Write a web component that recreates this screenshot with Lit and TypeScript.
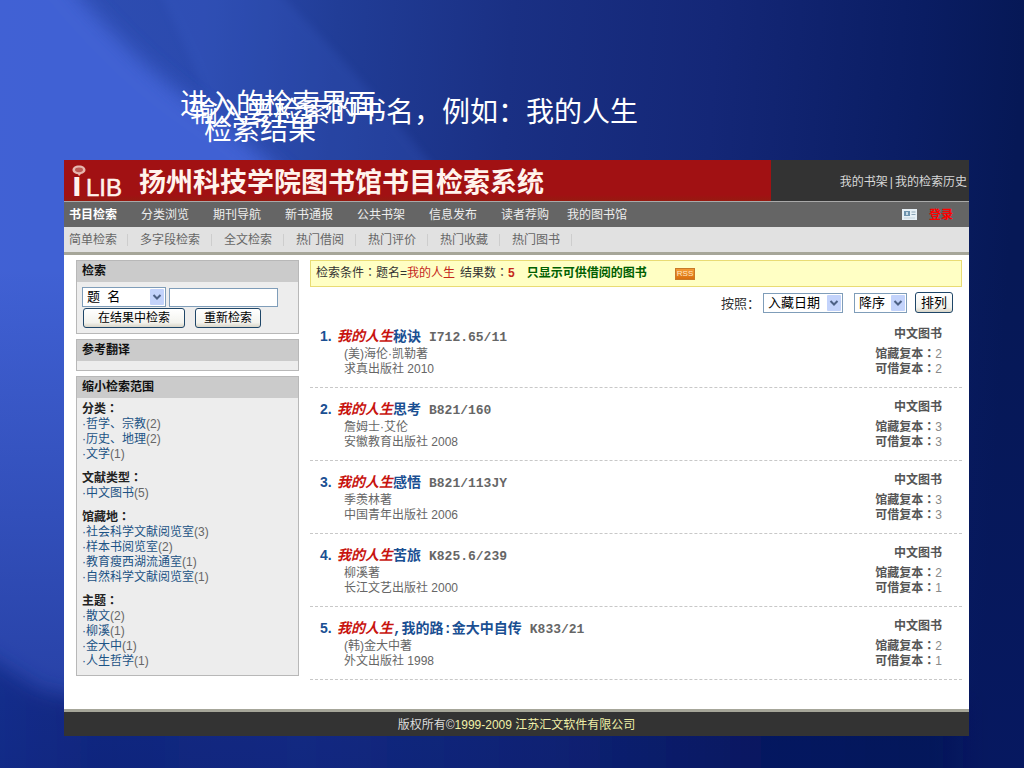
import { LitElement, html, css } from "lit";
import { customElement, property } from "lit/decorators.js";

interface Book {
  rest: string;
  call: string;
  author: string;
  publisher: string;
  total: number;
  free: number;
}

interface Facet {
  label: string;
  items: [string, number][];
}

const KEYWORD = "我的人生";

const BOOKS: Book[] = [
  { rest: "秘诀", call: "I712.65/11", author: "(美)海伦·凯勒著", publisher: "求真出版社 2010", total: 2, free: 2 },
  { rest: "思考", call: "B821/160", author: "詹姆士·艾伦", publisher: "安徽教育出版社 2008", total: 3, free: 3 },
  { rest: "感悟", call: "B821/113JY", author: "季羡林著", publisher: "中国青年出版社 2006", total: 3, free: 3 },
  { rest: "苦旅", call: "K825.6/239", author: "柳溪著", publisher: "长江文艺出版社 2000", total: 2, free: 1 },
  { rest: ",我的路:金大中自传", call: "K833/21", author: "(韩)金大中著", publisher: "外文出版社 1998", total: 2, free: 1 },
];

const FACETS: Facet[] = [
  { label: "分类", items: [["哲学、宗教", 2], ["历史、地理", 2], ["文学", 1]] },
  { label: "文献类型", items: [["中文图书", 5]] },
  { label: "馆藏地", items: [["社会科学文献阅览室", 3], ["样本书阅览室", 2], ["教育瘦西湖流通室", 1], ["自然科学文献阅览室", 1]] },
  { label: "主题", items: [["散文", 2], ["柳溪", 1], ["金大中", 1], ["人生哲学", 1]] },
];

const NAV = ["书目检索", "分类浏览", "期刊导航", "新书通报", "公共书架", "信息发布", "读者荐购", "我的图书馆"];
const SUBNAV = ["简单检索", "多字段检索", "全文检索", "热门借阅", "热门评价", "热门收藏", "热门图书"];

const colon = html`<span class="colon">：</span>`;

const shared = css`
  :host {
    display: block;
    font-family: "Liberation Sans", "Noto Sans CJK SC", sans-serif;
    font-size: 12px;
    line-height: 15px;
  }
  * { box-sizing: border-box; }
  a { color: inherit; text-decoration: none; }
  ul, ol { list-style: none; margin: 0; padding: 0; }
  h1, h2, h3, p { margin: 0; font-size: inherit; }
  .colon { font-family: "Noto Sans CJK TC", sans-serif; line-height: 0; }
  button {
    height: 20px;
    padding: 0 8px;
    border: 1px solid #1f4668;
    border-radius: 3px;
    background: linear-gradient(#ffffff, #f3f3ee 75%, #d9d5c8);
    color: #000;
    font: 12px/14px "Liberation Sans", "Noto Sans CJK SC", sans-serif;
  }
`;

@customElement("pick-list")
class PickList extends LitElement {
  static styles = [shared, css`
    :host { position: relative; }
    select {
      display: block;
      width: 100%;
      height: 20px;
      padding: 0 20px 0 4px;
      border: 1px solid #7f9db9;
      border-radius: 0;
      background: #fff;
      color: #000;
      appearance: none;
      white-space: pre;
      font: 13px/18px "Liberation Sans", "Noto Sans CJK SC", sans-serif;
    }
    svg {
      position: absolute;
      top: 2px;
      right: 2px;
      pointer-events: none;
    }
  `];
  @property() name = "";
  @property({ type: Array }) options: string[] = [];

  render() {
    return html`
      <select aria-label=${this.name}>${this.options.map((o) => html`<option>${o}</option>`)}</select>
      <svg width="14" height="16" viewBox="0 0 14 16" aria-hidden="true">
        <rect width="14" height="16" rx="1" fill="#c3d3fb" />
        <path d="M3.5 6 L7 9.5 L10.5 6" fill="none" stroke="#4d6185" stroke-width="2" />
      </svg>`;
  }
}

@customElement("side-panels")
class SidePanels extends LitElement {
  static styles = [shared, css`
    :host { display: flex; flex-direction: column; gap: 5px; }
    section { border: 1px solid #b8b8b8; background: #ededed; color: #222; }
    h2 {
      padding: 2px 5px;
      background: #cbcbcb;
      line-height: 17px;
      color: #111;
    }
    .search { padding: 5px; }
    .row { display: flex; gap: 3px; align-items: center; }
    .buttons { gap: 10px; padding: 1px 0 0 1px; }
    pick-list { width: 84px; }
    input {
      width: 109px;
      height: 19px;
      border: 1px solid #7f9db9;
      background: #fff;
      font-size: 12px;
    }
    .wide { padding: 0 14px; }
    .empty { height: 9px; }
    .facets { display: flex; flex-direction: column; gap: 9px; padding: 4px 5px 6px; }
    .facets a { color: #1c5385; }
    .count { color: #666; }
  `];

  render() {
    return html`
      <section>
        <h2>检索</h2>
        <form class="search" @submit=${(e: Event) => e.preventDefault()}>
          <div class="row">
            <pick-list name="检索字段" .options=${["题\u00a0 名"]}></pick-list>
            <input type="text" aria-label="检索词" />
          </div>
          <div class="row buttons">
            <button class="wide">在结果中检索</button>
            <button>重新检索</button>
          </div>
        </form>
      </section>
      <section>
        <h2>参考翻译</h2>
        <div class="empty"></div>
      </section>
      <section>
        <h2>缩小检索范围</h2>
        <div class="facets">
          ${FACETS.map((f) => html`
            <div>
              <h3>${f.label}${colon}</h3>
              <ul>
                ${f.items.map(([name, n]) => html`<li><a href="#">·${name}</a><span class="count">(${n})</span></li>`)}
              </ul>
            </div>`)}
        </div>
      </section>`;
  }
}

@customElement("result-list")
class ResultList extends LitElement {
  static styles = [shared, css`
    .summary {
      display: flex;
      align-items: center;
      height: 27px;
      padding: 0 5px;
      border: 1px solid #e9dc74;
      background: #ffffc4;
      color: #333;
    }
    .red { color: #c5281c; }
    .summary .hits { margin-left: 5px; }
    .summary .only { margin-left: 12px; color: #006000; font-weight: bold; }
    .rss {
      margin-left: 28px;
      padding: 0 1px;
      border: 1px solid #c87a28;
      background: linear-gradient(#f39a35, #d9700f);
      color: #ffe9c8;
      font-size: 8px;
      line-height: 10px;
    }
    .sort {
      display: flex;
      justify-content: flex-end;
      align-items: center;
      padding: 5px 9px 2px 0;
      font-size: 13px;
      line-height: 21px;
      color: #333;
    }
    .sort span { padding: 2px 3px 0 0; line-height: 19px; }
    .sort pick-list { width: 80px; margin-right: 11px; }
    .sort pick-list.order { width: 53px; margin-right: 8px; }
    .sort button { height: 21px; padding: 0 5px; font-size: 13px; }
    li {
      display: flex;
      justify-content: space-between;
      padding: 12px 20px 10px 10px;
      border-bottom: 1px dashed #c8c8c8;
      color: #666;
    }
    h3 {
      display: flex;
      align-items: baseline;
      height: 18px;
      margin-bottom: 2px;
      font: bold 14px/18px "Liberation Mono", "Noto Sans CJK SC", monospace;
      color: #1a4f92;
    }
    .no { width: 17px; font-family: "Liberation Sans", sans-serif; }
    em { color: #c8140f; }
    .call { margin-left: 8px; font-size: 13px; color: #666; }
    .detail { padding-left: 24px; }
    .stock { text-align: right; color: #555; }
    .kind { margin-bottom: 5px; font-weight: bold; }
    .num { color: #888; }
  `];

  render() {
    return html`
      <div class="summary">
        <span>检索条件${colon}题名=</span><span class="red">${KEYWORD}</span>
        <span class="hits">结果数${colon}</span><b class="red">${BOOKS.length}</b>
        <a class="only" href="#">只显示可供借阅的图书</a>
        <a class="rss" href="#">RSS</a>
      </div>
      <div class="sort">
        <span>按照：</span>
        <pick-list name="排序字段" .options=${["入藏日期"]}></pick-list>
        <pick-list class="order" name="排序方向" .options=${["降序"]}></pick-list>
        <button>排列</button>
      </div>
      <ol>
        ${BOOKS.map((b, i) => html`
          <li>
            <div>
              <h3><span class="no">${i + 1}.</span><a href="#"><em>${KEYWORD}</em>${b.rest}</a><span class="call">${b.call}</span></h3>
              <div class="detail">
                <p>${b.author}</p>
                <p>${b.publisher}</p>
              </div>
            </div>
            <div class="stock">
              <p class="kind">中文图书</p>
              <p><b>馆藏复本${colon}</b><span class="num">${b.total}</span></p>
              <p><b>可借复本${colon}</b><span class="num">${b.free}</span></p>
            </div>
          </li>`)}
      </ol>`;
  }
}

@customElement("app-root")
class AppRoot extends LitElement {
  static styles = [shared, css`
    :host {
      display: flex;
      flex-direction: column;
      box-sizing: border-box;
      min-height: 100vh;
      position: relative;
      overflow: hidden;
      background: #0a1a5c;
    }
    .backdrop { position: absolute; inset: 0; width: 100%; height: 100%; }
    .captions {
      position: relative;
      height: 160px;
      color: #fff;
      font-size: 28px;
      line-height: 36px;
    }
    .captions p { position: absolute; white-space: nowrap; }
    .enter { left: 180px; top: 87px; }
    .type { left: 190px; top: 95px; }
    .result { left: 204px; top: 113px; }
    .window {
      position: relative;
      flex: 1;
      display: flex;
      flex-direction: column;
      margin: 0 55px 32px 64px;
      background: #fff;
    }
    .banner {
      display: grid;
      grid-template-columns: 1fr 198px;
      height: 42px;
      border-bottom: 1px solid #a9a9a9;
      background: #333;
    }
    .brand {
      display: flex;
      align-items: center;
      gap: 15px;
      padding-left: 6px;
      background: linear-gradient(#a11113 85%, #961a10);
    }
    h1 { padding-top: 5px; font-size: 27px; line-height: 36px; font-weight: bold; color: #fff3ec; white-space: nowrap; }
    .logo { overflow: visible; font-family: "Liberation Sans", sans-serif; }
    .mine {
      display: flex;
      align-items: center;
      justify-content: flex-end;
      gap: 2px;
      padding: 4px 2px 0 0;
      color: #d8d8d8;
    }
    .nav {
      display: flex;
      align-items: center;
      height: 25px;
      padding: 2px 16px 0 5px;
      background: #656565;
      color: #eee;
    }
    .nav ul { display: flex; flex: 1; gap: 24px; }
    .nav li:first-child { font-weight: bold; color: #fff; }
    .nav li:last-child { margin-left: -6px; }
    .nav svg { margin-bottom: 2px; }
    .login { margin-left: 12px; font-weight: bold; color: #f00; }
    .subnav {
      display: flex;
      align-items: center;
      height: 28px;
      padding-top: 1px;
      border-bottom: 3px solid #a6a699;
      background: #e1e1e1;
      color: #666;
    }
    .subnav ul { display: flex; padding-left: 5px; }
    .subnav li { padding: 0 11px 0 12px; border-right: 1px solid #cdcdcd; line-height: 12px; }
    .subnav li:first-child { padding: 0 10px 0 0; }
    .body {
      flex: 1;
      display: grid;
      grid-template-columns: 223px 1fr;
      gap: 11px;
      align-items: start;
      padding: 5px 7px 0 12px;
    }
    footer {
      padding: 6px 0 3px;
      border-top: 3px solid #a6a699;
      background: #333;
      color: #ddd;
      text-align: center;
    }
    footer a { color: #f0f0a8; }
  `];

  render() {
    return html`
      <svg class="backdrop" viewBox="0 0 1024 768" preserveAspectRatio="none" aria-hidden="true">
        <defs>
          <linearGradient id="base" x1="0" y1="0" x2="1" y2="0.05">
            <stop offset="0" stop-color="#2f4fb4" />
            <stop offset="0.2" stop-color="#2b4aae" />
            <stop offset="0.33" stop-color="#213d97" />
            <stop offset="0.5" stop-color="#1a3084" />
            <stop offset="0.7" stop-color="#142777" />
            <stop offset="0.9" stop-color="#0a1d63" />
            <stop offset="1" stop-color="#061856" />
          </linearGradient>
          <linearGradient id="foot" x1="0" y1="0" x2="0" y2="1">
            <stop offset="0.35" stop-color="#07186a" stop-opacity="0" />
            <stop offset="1" stop-color="#07186a" stop-opacity="0.5" />
          </linearGradient>
          <linearGradient id="strip" gradientUnits="userSpaceOnUse" x1="0" y1="0" x2="1024" y2="0">
            <stop offset="0" stop-color="#1f3ca4" />
            <stop offset="0.1" stop-color="#183290" />
            <stop offset="0.3" stop-color="#1c3796" />
            <stop offset="0.55" stop-color="#14297a" />
            <stop offset="0.75" stop-color="#061656" />
            <stop offset="0.92" stop-color="#04124c" />
            <stop offset="0.95" stop-color="#04124c" stop-opacity="0" />
          </linearGradient>
          <filter id="soft" x="-20%" y="-20%" width="140%" height="140%"><feGaussianBlur stdDeviation="10" /></filter>
          <filter id="faint" x="-20%" y="-20%" width="140%" height="140%"><feGaussianBlur stdDeviation="4" /></filter>
        </defs>
        <rect width="1024" height="768" fill="url(#base)" />
        <path d="M150 -30 L255 -30 Q350 60 460 200 L560 300 L300 300 Z" fill="#3d60cc" opacity="0.22" filter="url(#faint)" />
        <path d="M-60 -60 L50 -40 Q120 50 190 100 Q250 140 340 230 L800 830 L-60 830 Z" fill="#4263d6" opacity="0.95" filter="url(#soft)" />
        <path d="M-40 640 L40 690 L90 700 L1024 700 L1024 860 L-40 860 Z" fill="url(#strip)" filter="url(#soft)" />
        <rect width="1024" height="768" fill="url(#foot)" />
      </svg>
      <div class="captions">
        <p class="enter">进入的检索界面</p>
        <p class="type">输入要检索的书名，例如：我的人生</p>
        <p class="result">检索结果</p>
      </div>
      <div class="window">
        <header>
          <div class="banner">
            <div class="brand">
              <svg class="logo" width="54" height="41" viewBox="0 0 54 41" role="img" aria-label="iLIB">
                <text x="2" y="36" font-size="35" font-weight="bold" fill="#fff3ec">i</text>
                <text x="16" y="36" font-size="24" fill="#fff3ec" stroke="#fff3ec" stroke-width="0.5">LIB</text>
                <rect x="1" y="5" width="14" height="10" fill="#a11113" />
                <path d="M9 5.5 C13 5.5 15.5 7.5 15.5 10 C15.5 12 13.5 13.6 11 14 L9 16 L8 14.2 C4.8 14 2.5 12 2.5 10 C2.5 7.5 5 5.5 9 5.5 Z" fill="#e8b8b0" />
                <ellipse cx="9" cy="9.8" rx="4" ry="2.4" fill="#bc5a54" />
              </svg>
              <h1>扬州科技学院图书馆书目检索系统</h1>
            </div>
            <div class="mine"><a href="#">我的书架</a> <span>|</span><a href="#">我的检索历史</a></div>
          </div>
          <nav class="nav">
            <ul>${NAV.map((t) => html`<li><a href="#">${t}</a></li>`)}</ul>
            <svg width="15" height="11" viewBox="0 0 15 11" aria-hidden="true">
              <rect width="15" height="11" fill="#e6f0f6" />
              <rect x="2" y="2" width="6" height="5" fill="#6d93ae" />
              <path d="M4 3h2v3h-2z" fill="#c4d8e4" />
              <path d="M9.5 3h4M9.5 5.5h4" stroke="#8aa4b4" />
              <path d="M2 9h11" stroke="#c2d2dc" />
            </svg>
            <a class="login" href="#">登录</a>
          </nav>
          <nav class="subnav">
            <ul>${SUBNAV.map((t) => html`<li><a href="#">${t}</a></li>`)}</ul>
          </nav>
        </header>
        <main class="body">
          <side-panels></side-panels>
          <result-list></result-list>
        </main>
        <footer>版权所有©<a href="#">1999-2009 江苏汇文软件有限公司</a></footer>
      </div>`;
  }
}
